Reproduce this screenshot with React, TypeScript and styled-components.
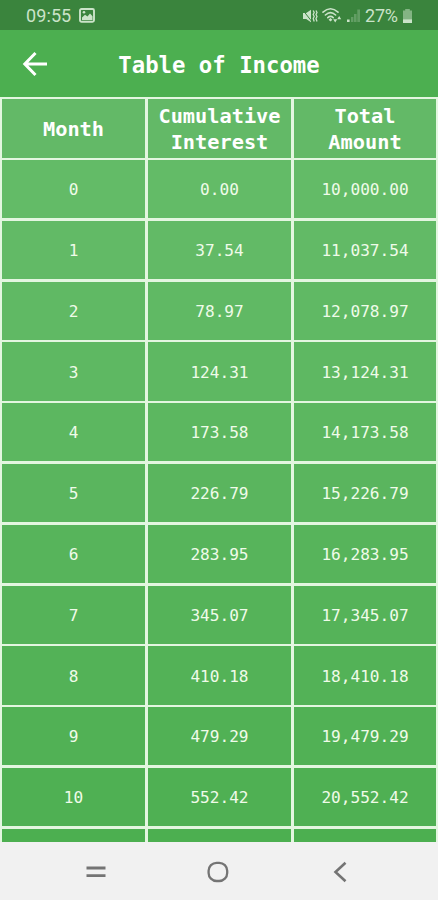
import React from 'react';
import styled, { createGlobalStyle } from 'styled-components';

const GlobalStyle = createGlobalStyle`
  * { box-sizing: border-box; }
  html, body { margin: 0; padding: 0; }
`;

const Screen = styled.div`
  width: 438px;
  height: 900px;
  display: flex;
  flex-direction: column;
  overflow: hidden;
  background: #4caf50;
  color: #fff;
  font-family: 'DejaVu Sans Mono', monospace;
`;

const StatusBar = styled.div`
  height: 30px;
  flex: none;
  display: flex;
  align-items: center;
  justify-content: space-between;
  padding: 1px 25px 0 26px;
  background: #3a843d;
  color: #cbe3c9;
  font-family: Roboto, sans-serif;
  font-size: 18px;
`;

const StatusGroup = styled.div<{ $gap: number }>`
  display: flex;
  align-items: center;
  gap: ${(p) => p.$gap}px;
  white-space: nowrap;
  svg { display: block; }
`;

const StatusText = styled.span<{ $width: number }>`
  width: ${(p) => p.$width}px;
  letter-spacing: ${(p) => (p.$width > 40 ? 0.1 : -0.2)}px;
`;

const AppBar = styled.header`
  height: 67px;
  flex: none;
  display: grid;
  grid-template-columns: 70px 298px 70px;
  align-items: center;
  background: #4caf50;
`;

const BackButton = styled.button`
  border: 0;
  padding: 0 0 0 21px;
  background: none;
  color: #fff;
  display: flex;
  svg { display: block; }
`;

const Title = styled.h1`
  margin: 2px 0 0;
  text-align: center;
  font-size: 22.3px;
  line-height: 28px;
  font-weight: 700;
  white-space: nowrap;
`;

const Table = styled.div`
  height: 745px;
  flex: none;
  overflow: hidden;
  display: grid;
  grid-template-columns: 143px 143px 142px;
  grid-template-rows: 58.5px;
  grid-auto-rows: 58.3px;
  column-gap: 3px;
  row-gap: 2.5px;
  padding: 2px 2px 0;
  background: #e3f6e0;
`;

const Row = styled.div<{ $color: string }>`
  display: contents;
  > div { background: ${(p) => p.$color}; }
`;

const Cell = styled.div`
  display: flex;
  align-items: center;
  justify-content: center;
  padding-top: 1px;
  font-size: 16.1px;
  color: #effbe9;
`;

const HeadCell = styled(Cell)`
  font-size: 20.3px;
  line-height: 26px;
  font-weight: 700;
  text-align: center;
  white-space: pre-line;
  color: #fff;
`;

const NavBar = styled.nav`
  flex: 1;
  display: flex;
  align-items: center;
  justify-content: space-between;
  padding: 2px 86px 0 84px;
  background: #f1f1f1;
  color: #747474;
  svg { display: block; }
`;

const rows = [
  ['0', '0.00', '10,000.00'],
  ['1', '37.54', '11,037.54'],
  ['2', '78.97', '12,078.97'],
  ['3', '124.31', '13,124.31'],
  ['4', '173.58', '14,173.58'],
  ['5', '226.79', '15,226.79'],
  ['6', '283.95', '16,283.95'],
  ['7', '345.07', '17,345.07'],
  ['8', '410.18', '18,410.18'],
  ['9', '479.29', '19,479.29'],
  ['10', '552.42', '20,552.42'],
  ['', '', ''],
];

const rowColors = [
  '#63bb67', '#62ba66', '#60b964', '#5eb862', '#5cb760', '#5ab55e',
  '#57b45b', '#55b359', '#53b257', '#51b155', '#4fb053', '#4caf50',
];

const ImageIcon = () => (
  <svg width="16" height="15" viewBox="0 0 16 15">
    <rect x="1" y="1" width="14" height="12.8" rx="1.5" fill="none" stroke="currentColor" strokeWidth="1.9" />
    <path d="M3 12V9.4l3-2.6 2.5 1.6L11 5.5l2.5 2.7V12z" fill="currentColor" />
    <circle cx="5" cy="4.3" r="1.3" fill="currentColor" />
  </svg>
);

const MuteIcon = () => (
  <svg width="16" height="16" viewBox="0 0 16 16" fill="none" stroke="currentColor">
    <path d="M1 5h3.2L9 1.8v12.4L4.2 11H1z" fill="currentColor" stroke="none" />
    <path d="M.8 2l9 11.5" stroke="#3a843d" strokeWidth="1" />
    <path d="M11.2 2.5l1 2-1 2 1 2-1 2 1 3M14 2.5l1 2-1 2 1 2-1 2 1 3" strokeWidth="1.3" />
  </svg>
);

const WifiIcon = () => (
  <svg width="20" height="17" viewBox="0 0 20 17" fill="none" stroke="currentColor" strokeLinecap="round">
    <path d="M1 5.2Q8.5-1.7 16 5.2M3.4 8Q8.5 3.2 13.6 8M5.8 10.6Q8.5 8.2 11.2 10.6" strokeWidth="1.6" />
    <path d="M8.5 11l1.9 1.7-1.9 1.8-1.9-1.8z" fill="currentColor" stroke="none" />
    <path d="M11.2 12.2h4l-2 3.2zM15.2 12.2h4l-2-3.2z" fill="currentColor" stroke="none" />
  </svg>
);

const SignalIcon = () => (
  <svg width="15" height="15" viewBox="0 0 15 15" fill="currentColor">
    <path d="M1 11.5h2.6V14H1z" />
    <path d="M5 9h2.4v5H5zM8 6h2.6v8H8zM11.3 1.5H14V14h-2.7z" opacity=".28" />
  </svg>
);

const BatteryIcon = () => (
  <svg width="11" height="16" viewBox="0 0 11 16" fill="currentColor">
    <path d="M3.2 1h4.6v1.5H10V12H1V2.5h2.2z" opacity=".5" />
    <path d="M1 11.4h9V15H1z" />
  </svg>
);

const BackArrow = () => (
  <svg width="28" height="26" viewBox="0 0 28 26" fill="none" stroke="currentColor" strokeWidth="3">
    <path d="M26 13H4M14.5 2L3.8 13l10.7 11" />
  </svg>
);

export default function App() {
  return (
    <>
      <GlobalStyle />
      <Screen>
        <StatusBar>
          <StatusGroup $gap={7}>
            <StatusText $width={46}>09:55</StatusText>
            <ImageIcon />
          </StatusGroup>
          <StatusGroup $gap={4}>
            <MuteIcon />
            <WifiIcon />
            <SignalIcon />
            <StatusText $width={33}>27%</StatusText>
            <BatteryIcon />
          </StatusGroup>
        </StatusBar>
        <AppBar>
          <BackButton aria-label="Back"><BackArrow /></BackButton>
          <Title>Table of Income</Title>
        </AppBar>
        <Table>
          <Row $color="#63b967">
            <HeadCell>Month</HeadCell>
            <HeadCell>{'Cumulative\nInterest'}</HeadCell>
            <HeadCell>{'Total\nAmount'}</HeadCell>
          </Row>
          {rows.map((row, i) => (
            <Row key={i} $color={rowColors[i]}>
              {row.map((value, j) => <Cell key={j}>{value}</Cell>)}
            </Row>
          ))}
        </Table>
        <NavBar>
          <svg width="24" height="20" viewBox="0 0 24 20" stroke="currentColor" strokeWidth="2.8">
            <path d="M2.5 6h19M2.5 13.6h19" />
          </svg>
          <svg width="24" height="24" viewBox="0 0 24 24" fill="none" stroke="currentColor" strokeWidth="2.3">
            <rect x="2.6" y="2.8" width="18.6" height="18.2" rx="8" />
          </svg>
          <svg width="24" height="24" viewBox="0 0 24 24" fill="none" stroke="currentColor" strokeWidth="2.6">
            <path d="M17.5 2.8L7.5 12l10 9.2" />
          </svg>
        </NavBar>
      </Screen>
    </>
  );
}
